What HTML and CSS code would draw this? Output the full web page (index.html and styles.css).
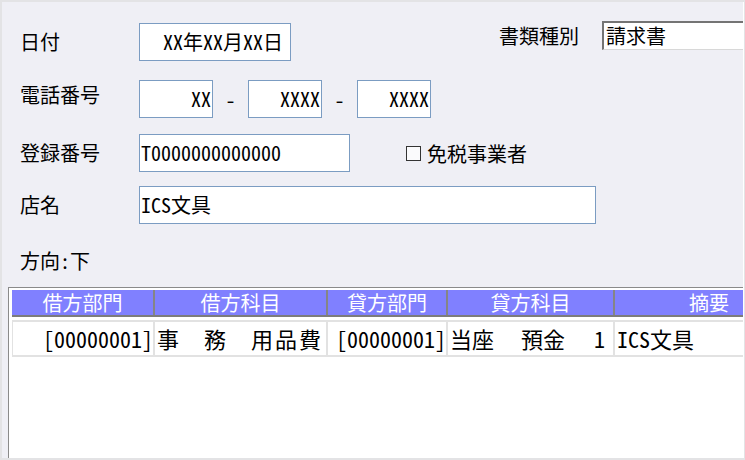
FILE: index.html
```html
<!DOCTYPE html>
<html lang="ja">
<head>
    <meta charset="UTF-8">
    <meta name="viewport" content="width=device-width, initial-scale=1.0">
    <title>証憑入力</title>
    <link rel="stylesheet" href="styles.css">
</head>
<body>

<div class="window">
    <div class="form">
        <div class="row row-top">
            <span class="label">日付</span>
            <div class="field date">XX年XX月XX日</div>
            <div class="doc">
                <span class="doc-label">書類種別</span>
                <div class="doc-field">請求書</div>
            </div>
        </div>

        <div class="row">
            <span class="label up">電話番号</span>
            <div class="field tel">XX</div>
            <span class="dash">-</span>
            <div class="field tel">XXXX</div>
            <span class="dash">-</span>
            <div class="field tel">XXXX</div>
        </div>

        <div class="row reg-row">
            <span class="label">登録番号</span>
            <div class="field reg">T0000000000000</div>
            <span class="check"><span class="box"></span>免税事業者</span>
        </div>

        <div class="row shop-row">
            <span class="label">店名</span>
            <div class="field shop">ICS文具</div>
        </div>

        <div class="dir">方向:下</div>
    </div>

    <div class="grid">
        <div class="grid-head">
            <div class="c1">借方部門</div>
            <div class="c2">借方科目</div>
            <div class="c3">貸方部門</div>
            <div class="c4">貸方科目</div>
            <div class="c5">摘要</div>
        </div>
        <div class="grid-row">
            <div class="c1 num">[00000001]</div>
            <div class="c2"><span class="sp">事</span><span class="sp">務</span><span>用品費</span></div>
            <div class="c3 num">[00000001]</div>
            <div class="c4 acct"><span><span class="sp2">当座</span>預金</span><span>1</span></div>
            <div class="c5">ICS文具</div>
        </div>
    </div>
</div>

</body>
</html>
```

FILE: styles.css
```css
body {
    margin: 0;
    background: #e3e3e5;
    font-family: "Noto Sans Mono CJK JP", "Noto Sans CJK JP", sans-serif;
    color: #000;
}
.window {
    margin: 2px 0 0 2px;
    width: 741px;
    height: 456px;
    background: #efeff5;
    border-right: 1px solid #fff;
    overflow: hidden;
}
.form {
    padding: 19px 0 0 18px;
}
.row {
    display: flex;
    align-items: center;
    height: 38px;
    margin-top: 19px;
}
.row-top {
    align-items: flex-start;
    height: 40px;
    margin-top: 0;
}
.reg-row {
    margin-top: 16px;
}
.shop-row {
    margin-top: 14px;
}
.label {
    width: 119px;
    font-size: 20px;
    line-height: 38px;
    flex-shrink: 0;
}
.row-top .label {
    margin-top: 2px;
}
.label.up {
    line-height: 30px;
    align-self: flex-start;
}
.field {
    box-sizing: border-box;
    height: 38px;
    border: 1px solid #7b9cc2;
    background: #fff;
    font-size: 20px;
    line-height: 36px;
    padding: 0 1px;
    white-space: nowrap;
    flex-shrink: 0;
}
.date {
    width: 152px;
    margin-top: 2px;
    text-align: right;
    padding-right: 7px;
}
.tel {
    width: 74px;
    text-align: right;
}
.dash {
    width: 35px;
    text-align: center;
    font-size: 20px;
}
.reg {
    width: 211px;
}
.shop {
    width: 457px;
}
.doc {
    display: flex;
    margin-left: 208px;
    flex-shrink: 0;
}
.doc-label {
    width: 103px;
    font-size: 20px;
    line-height: 29px;
}
.doc-field {
    box-sizing: border-box;
    width: 160px;
    height: 29px;
    background: #fff;
    border-top: 2px solid #747474;
    border-left: 2px solid #747474;
    border-bottom: 1px solid #d8d8d8;
    font-size: 20px;
    line-height: 26px;
    padding-left: 2px;
}
.check {
    display: flex;
    align-items: center;
    margin-left: 56px;
    font-size: 20px;
}
.box {
    box-sizing: border-box;
    width: 15px;
    height: 15px;
    border: 1px solid #333;
    background: #fafafc;
    margin-right: 6px;
}
.dir {
    margin-top: 27px;
    font-size: 20px;
    line-height: 20px;
}

/* 仕訳グリッド */
.grid {
    margin: 16px 0 0 6px;
    width: 820px;
    height: 200px;
    background: #fff;
    border-top: 1px solid #8a8a8a;
    border-left: 1px solid #8a8a8a;
    padding: 2px 0 0 3px;
}
.grid-head {
    display: flex;
    height: 25px;
    background: #8080ff;
    border-bottom: 2px solid #7c7c7c;
    color: #fff;
    font-size: 20px;
    line-height: 25px;
}
.grid-head > div {
    box-sizing: border-box;
    text-align: center;
    border-right: 2px solid #858585;
}
.c1 { width: 143px; }
.c2 { width: 173px; }
.c3 { width: 120px; }
.c4 { width: 167px; }
.c5 { width: 190px; }
.grid-row {
    display: flex;
    margin-top: 3px;
    border-top: 2px solid #e2e2e2;
    border-bottom: 2px solid #e2e2e2;
    font-size: 22px;
    line-height: 33px;
    white-space: nowrap;
}
.grid-row > div {
    box-sizing: border-box;
    border-right: 2px solid #e2e2e2;
    padding-left: 2px;
    overflow: hidden;
}
.grid-row > .c1 {
    border-left: 1px solid #e2e2e2;
}
.grid-row > .num {
    text-align: right;
    padding: 0;
}
.grid-row .c2 {
    letter-spacing: 2px;
}
.sp {
    margin-right: 23px;
}
.acct {
    display: flex;
    justify-content: space-between;
    padding: 0 8px 0 4px;
}
.sp2 {
    margin-right: 27px;
}
```
